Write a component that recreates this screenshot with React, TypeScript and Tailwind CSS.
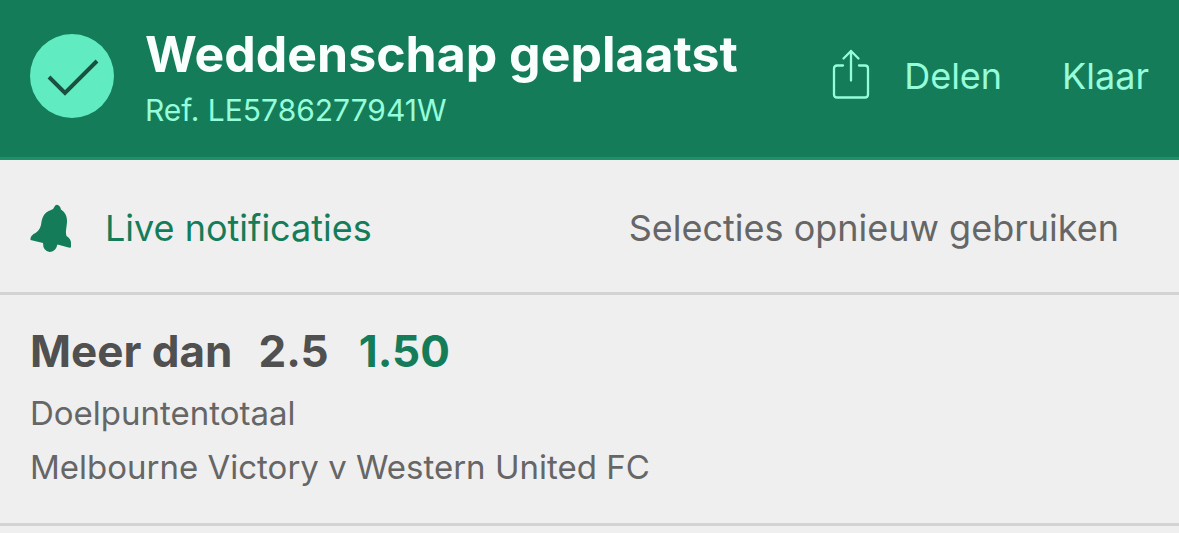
export default function App() {
  return (
    <main className="min-h-screen bg-[#efefef] font-['Inter','Roboto',sans-serif]">
      <header className="flex h-40 items-center border-b-[3px] border-[#1f916a] bg-[#157c5a] pr-[30px] pb-[6px] pl-[30px] text-[#95fdda]">
        <svg className="size-[84px] shrink-0" viewBox="0 0 84 84" fill="none" aria-hidden="true">
          <circle cx="42" cy="42" r="42" fill="#61ebc0" />
          <path d="M19 43 35 59 67 27" stroke="#1b4f40" strokeWidth="4" />
        </svg>
        <div className="ml-[31px] min-w-0 flex-1 pt-1">
          <h1 className="text-[50px] leading-[60px] font-bold whitespace-nowrap text-[#f8fffd]">Weddenschap geplaatst</h1>
          <p className="mt-1 text-[30px] leading-[44px] whitespace-nowrap">Ref. LE5786277941W</p>
        </div>
        <button className="flex shrink-0 items-center gap-[34px] text-[36px] leading-[44px]">
          <svg className="mb-1 h-[50px] w-[38px]" viewBox="0 0 38 50" fill="none" stroke="currentColor" strokeWidth="2.3" strokeLinecap="round" strokeLinejoin="round" aria-hidden="true">
            <path d="M11 16.5H5Q2 16.5 2 19.5V45.5Q2 48.5 5 48.5H33Q36 48.5 36 45.5V19.5Q36 16.5 33 16.5H27M19 31.5V2M11.5 9.5 19 2 26.5 9.5" />
          </svg>
          Delen
        </button>
        <button className="ml-[60px] shrink-0 text-[36px] leading-[44px]">Klaar</button>
      </header>
      <section className="flex h-[135px] items-center justify-between border-b-[3px] border-[#d3d3d3] pt-1 pr-[60px] pl-[30px] text-[36px] leading-[44px] text-[#666]">
        <button className="flex items-center gap-[33px] text-[#157c5a]">
          <svg className="h-12 w-[42px]" viewBox="0 0 42 48" fill="currentColor" aria-hidden="true">
            <path d="M27 .8Q30 1.3 31 5.5Q36.5 9 37 16C37.2 22 35 27 36.5 32Q41 35 41 39V42.5Q41 44 39.5 43.8L27.5 40.5Q25.5 48 19.5 48Q13 47 13 39L.5 36V34.5Q1 31 5.5 29Q9.5 26.5 11 21C12 15 12.5 9 21 6Q23.5 5.3 24.3 3Q25.2 .8 27 .8Z" />
          </svg>
          Live notificaties
        </button>
        <button>Selecties opnieuw gebruiken</button>
      </section>
      <section className="border-b-[3px] border-[#d3d3d3] px-[30px] pt-[26px] pb-[29px] text-[33px] leading-[54px] text-[#666]">
        <h2 className="mb-[5px] flex text-[44px] leading-[60px] font-bold text-[#505050]">
          <span>Meer dan</span>
          <span className="ml-[26px]">2.5</span>
          <span className="ml-[30px] text-[#157c5a]">1.50</span>
        </h2>
        <p>Doelpuntentotaal</p>
        <p>Melbourne Victory v Western United FC</p>
      </section>
    </main>
  )
}
